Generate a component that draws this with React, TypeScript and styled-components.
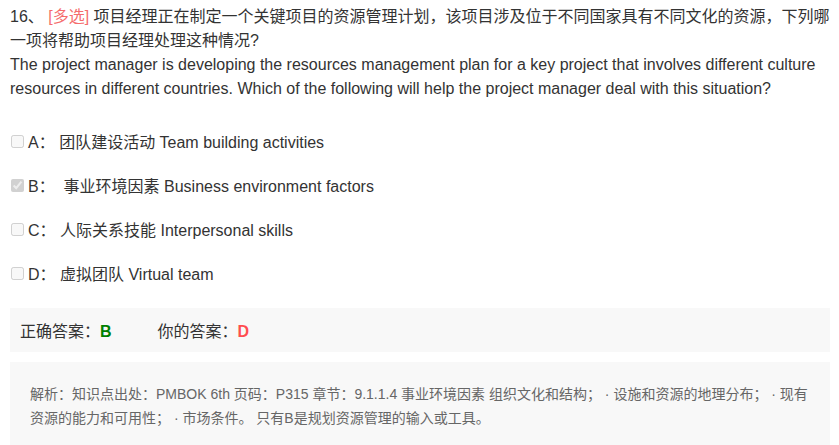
import React from "react";
import styled, { createGlobalStyle } from "styled-components";

const GlobalStyle = createGlobalStyle`
  html, body {
    margin: 0;
    padding: 0;
    background: #fff;
  }
  body {
    font-family: "Liberation Sans", Arial, "Noto Sans CJK SC", sans-serif;
    color: #333;
  }
`;

const Page = styled.div`
  padding: 5px 10px 0 10px;
  width: 820px;
`;

const Question = styled.div`
  font-size: 16px;
  line-height: 24px;
  color: #333;
`;

const Tag = styled.span`
  color: #f56c6c;
`;

const Options = styled.div`
  margin-top: 18px;
`;

const OptionRow = styled.label`
  display: flex;
  align-items: center;
  height: 44px;
  font-size: 16px;
  color: #333;
`;

const Check = styled.input`
  width: 13px;
  height: 13px;
  margin: 0 4px 0 1px;
`;

const AnswerBar = styled.div`
  display: flex;
  align-items: center;
  height: 44px;
  margin-top: 13px;
  padding: 0 10px;
  background: #f8f8f8;
  font-size: 16px;
  color: #333;
`;

const AnswerItem = styled.span`
  margin-right: 46px;
`;

const Mark = styled.b<{ $ok?: boolean }>`
  color: ${(p) => (p.$ok ? "#008000" : "#ff4d4f")};
`;

const Analysis = styled.div`
  margin-top: 10px;
  padding: 20px 20px 30px 20px;
  background: #f8f8f8;
  font-size: 14px;
  line-height: 24px;
  color: #666;
`;

const options = [
  { key: "A", text: "团队建设活动 Team building activities", checked: false },
  { key: "B", text: "\u00a0事业环境因素 Business environment factors", checked: true },
  { key: "C", text: "人际关系技能 Interpersonal skills", checked: false },
  { key: "D", text: "虚拟团队 Virtual team", checked: false },
];

export default function App() {
  return (
    <Page>
      <GlobalStyle />
      <Question>
        16、 <Tag>[多选]</Tag> 项目经理正在制定一个关键项目的资源管理计划，该项目涉及位于不同国家具有不同文化的资源，下列哪一项将帮助项目经理处理这种情况?
        <br />
        The project manager is developing the resources management plan for a key project that involves different culture resources in different countries. Which of the following will help the project manager deal with this situation?
      </Question>
      <Options>
        {options.map((o) => (
          <OptionRow key={o.key}>
            <Check type="checkbox" disabled defaultChecked={o.checked} />
            {o.key}： {o.text}
          </OptionRow>
        ))}
      </Options>
      <AnswerBar>
        <AnswerItem>
          正确答案：<Mark $ok>B</Mark>
        </AnswerItem>
        <AnswerItem>
          你的答案：<Mark>D</Mark>
        </AnswerItem>
      </AnswerBar>
      <Analysis>
        解析：知识点出处：PMBOK 6th 页码：P315 章节：9.1.1.4 事业环境因素 组织文化和结构； · 设施和资源的地理分布； · 现有资源的能力和可用性； · 市场条件。 只有B是规划资源管理的输入或工具。
      </Analysis>
    </Page>
  );
}
